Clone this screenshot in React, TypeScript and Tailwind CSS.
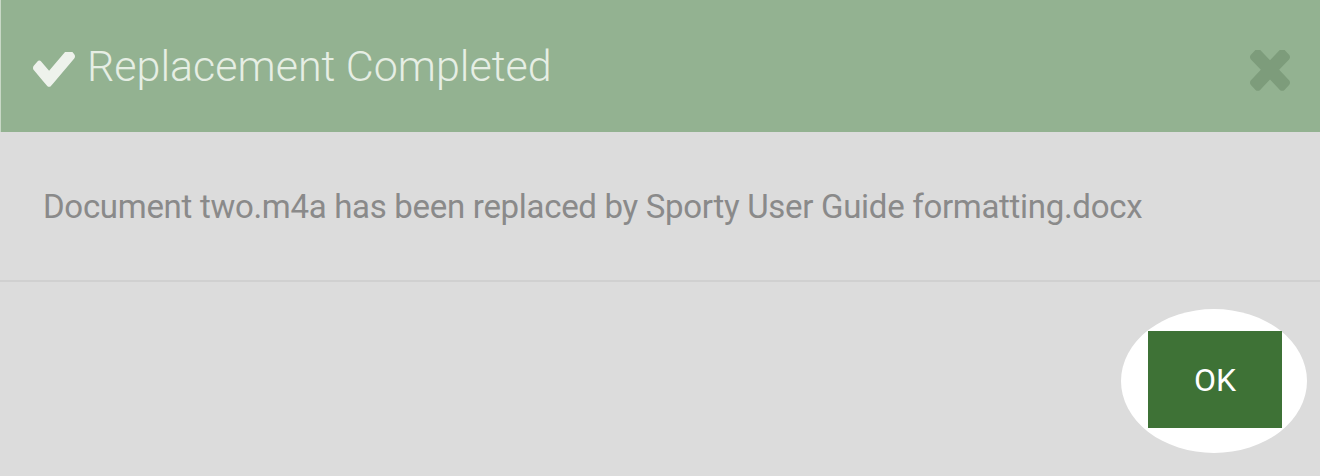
import React from "react";

export default function App() {
  return (
    <div
      className="w-[1320px] h-[476px] flex flex-col bg-[#dcdcdc] overflow-hidden"
      style={{ fontFamily: "Roboto, 'Liberation Sans', sans-serif" }}
    >
      <div className="h-[132px] shrink-0 bg-[#93b291] border-l border-[#c8d8c6] flex items-center pl-[32px] pr-[30px]">
        <svg width="42" height="35" viewBox="121 430 1550 1096" preserveAspectRatio="none" className="mr-[12px] mt-[6px]">
          <path
            fill="#eef2ec"
            d="M1671 566q0 40-28 68l-724 724-136 136q-28 28-68 28t-68-28l-136-136-362-362q-28-28-28-68t28-68l136-136q28-28 68-28t68 28l294 295 656-657q28-28 68-28t68 28l136 136q28 28 28 68z"
          />
        </svg>
        <div className="text-[43px] font-light text-[#e6eee4] leading-none">
          Replacement Completed
        </div>
        <div className="flex-1" />
        <svg width="40" height="42" viewBox="110 110 1188 1188" preserveAspectRatio="none" className="mt-[10px]">
          <path
            fill="#7d9c7b"
            d="M1298 1034q0 40-28 68l-136 136q-28 28-68 28t-68-28l-294-294-294 294q-28 28-68 28t-68-28l-136-136q-28-28-28-68t28-68l294-294-294-294q-28-28-28-68t28-68l136-136q28-28 68-28t68 28l294 294 294-294q28-28 68-28t68 28l136 136q28 28 28 68t-28 68l-294 294 294 294q28 28 28 68z"
          />
        </svg>
      </div>
      <div className="h-[150px] shrink-0 flex items-center pl-[43px] border-b-2 border-[#d0d0d0]">
        <div className="text-[33px] tracking-[-0.3px] text-[#8a8a8a] leading-none">
          Document two.m4a has been replaced by Sporty User Guide formatting.docx
        </div>
      </div>
      <div className="flex-1 flex justify-end items-start pt-[49px] pr-[38px]">
        <div className="relative">
          <div className="absolute left-[-27px] top-[-22px] w-[186px] h-[144px] rounded-[50%] bg-white" />
          <button className="relative w-[134px] h-[97px] bg-[#3e7236] text-white text-[32px] font-normal leading-none flex items-center justify-center">
            OK
          </button>
        </div>
      </div>
    </div>
  );
}
